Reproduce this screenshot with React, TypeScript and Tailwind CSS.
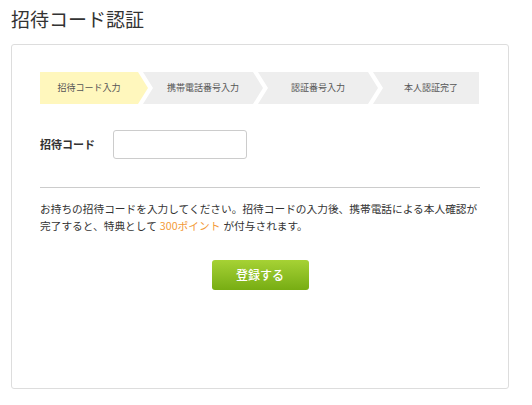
const steps = [
  { label: "招待コード入力", width: "w-[108px]", active: true, first: true },
  { label: "携帯電話番号入力", width: "w-[120px]" },
  { label: "認証番号入力", width: "w-[120px]" },
  { label: "本人認証完了", width: "w-[106px]", last: true },
];

function StepBar() {
  return (
    <div className="flex h-[32px]">
      {steps.map((s, i) => (
        <div
          key={s.label}
          className={[
            "flex h-full items-center justify-center text-[9px] text-[#555]",
            s.width,
            i > 0 ? "-ml-[5px]" : "",
            s.active ? "bg-[#fff7bd]" : "bg-[#eeeeee]",
            s.first
              ? "pr-[10px] [clip-path:polygon(0_0,calc(100%-10px)_0,100%_50%,calc(100%-10px)_100%,0_100%)]"
              : s.last
                ? "pl-[10px] [clip-path:polygon(0_0,100%_0,100%_100%,0_100%,10px_50%)]"
                : "px-[10px] [clip-path:polygon(0_0,calc(100%-10px)_0,100%_50%,calc(100%-10px)_100%,0_100%,10px_50%)]",
          ].join(" ")}
        >
          {s.label}
        </div>
      ))}
    </div>
  );
}

export default function App() {
  return (
    <div className="h-[405px] w-[532px] bg-white font-['Noto_Sans_CJK_JP',sans-serif] text-[#333]">
      <h1 className="pl-[11px] pt-[5px] text-[19px] leading-[27px] text-[#333]">
        招待コード認証
      </h1>

      <div className="ml-[11px] mt-[12px] h-[345px] w-[498px] rounded-[3px] border border-[#dddddd] bg-white px-[28px] pt-[27px]">
        <StepBar />

        <div className="mt-[26px] flex h-[29px] items-center">
          <label className="w-[73px] text-[11px] font-bold text-[#333]">招待コード</label>
          <input
            type="text"
            className="h-[29px] w-[134px] rounded-[3px] border border-[#cccccc] bg-white px-2 text-[12px] outline-none"
          />
        </div>

        <hr className="mt-[28px] w-[440px] border-0 border-t border-[#cccccc]" />

        <p className="mt-[12px] w-[440px] text-[10.7px] leading-[17px] text-[#333]">
          お持ちの招待コードを入力してください。招待コードの入力後、携帯電話による本人確認が完了すると、特典として
          <span className="mx-[3px] text-[#f39a38]">300ポイント</span>が付与されます。
        </p>

        <div className="mt-[26px] flex w-[440px] justify-center">
          <button
            type="button"
            className="h-[30px] w-[97px] rounded-[3px] bg-gradient-to-b from-[#a6d234] to-[#77ad12] text-[12px] font-medium text-white"
          >
            登録する
          </button>
        </div>
      </div>
    </div>
  );
}
